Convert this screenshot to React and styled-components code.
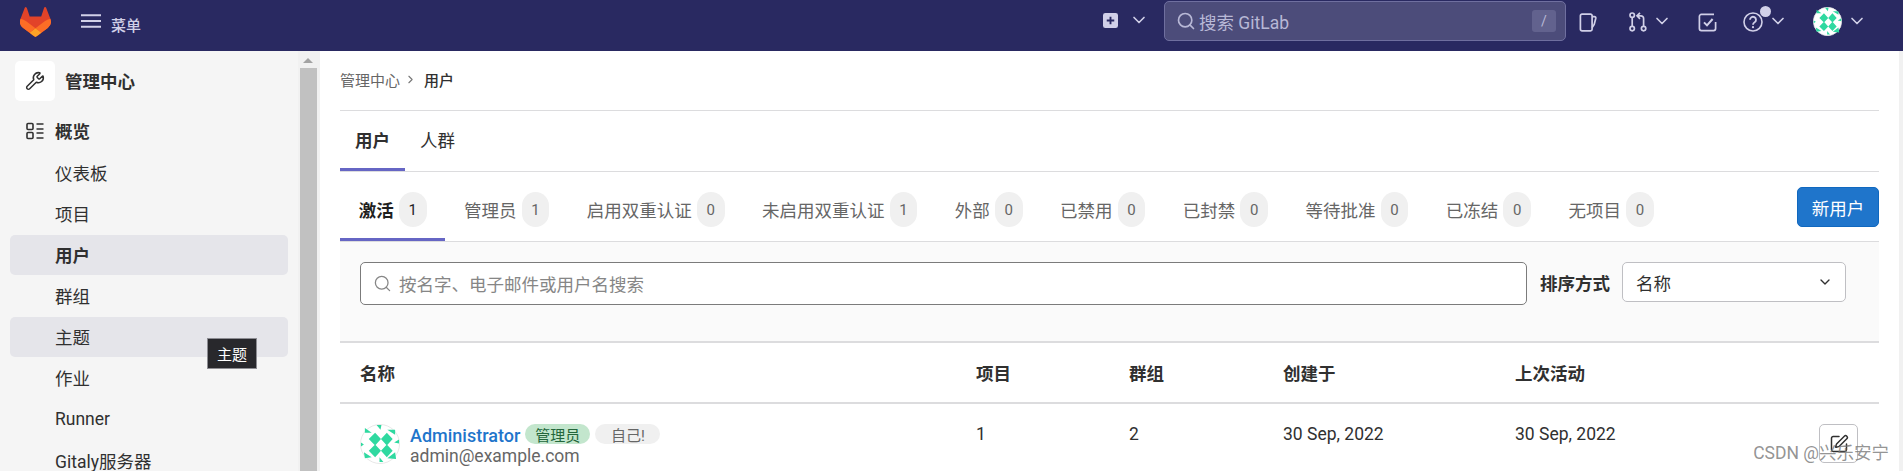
import React from "react";
import styled, { createGlobalStyle } from "styled-components";
import { ChevronDown, ChevronRight, Search, SquarePen, Wrench } from "lucide-react";

const FONT = `Roboto, "Noto Sans CJK SC", sans-serif`;

const GlobalStyle = createGlobalStyle`
  html, body {
    margin: 0;
    height: 100%;
    overflow: hidden;
    background: #fff;
  }
  body {
    font-family: ${FONT};
    font-size: 17.5px;
    color: #303030;
  }
`;

const Page = styled.div`
  position: relative;
  height: 471px;
  overflow: hidden;
`;

/* top bar */
const TopBar = styled.header`
  display: flex;
  align-items: center;
  height: 51px;
  padding-bottom: 1px;
  box-sizing: border-box;
  background: #292961;
  color: #d1d0e8;
`;
const Logo = styled.svg`
  width: 31px;
  height: 30px;
  margin: -6px 30px 0 20px;
`;
const MenuLabel = styled.span`
  font-size: 15px;
  font-weight: 500;
  margin-left: 10px;
  margin-top: -2px;
`;
const TopSpacer = styled.div`
  flex: 1;
`;
const TopEnd = styled.div`
  width: 36px;
  flex: none;
`;
const TopIcon = styled.svg`
  width: ${(p) => p.$w || 19}px;
  height: ${(p) => p.$h || 19}px;
  margin-left: ${(p) => p.$ml || 0}px;
  margin-top: ${(p) => p.$mt ?? -6}px;
  flex: none;
`;
const TopChevron = styled(ChevronDown)`
  width: 20px;
  height: 20px;
  margin-left: ${(p) => p.$ml}px;
  margin-top: ${(p) => p.$mt ?? -8}px;
  flex: none;
  stroke-width: 2;
`;
const SearchBox = styled.div`
  display: flex;
  align-items: center;
  width: 402px;
  height: 40px;
  margin-left: 15px;
  margin-top: -8px;
  padding: 0 9px 0 11px;
  box-sizing: border-box;
  background: #4c4c7a;
  border: 1px solid #6f6f9f;
  border-radius: 5px;
  color: #b8b8d6;
`;
const SearchText = styled.span`
  flex: 1;
  margin-left: 3px;
  font-size: 17.5px;
`;
const SlashKey = styled.span`
  display: flex;
  align-items: center;
  justify-content: center;
  width: 24px;
  height: 22px;
  border-radius: 3px;
  background: #62628e;
  font-size: 14px;
`;
const HelpWrap = styled.div`
  position: relative;
  display: flex;
  margin-left: 26px;
  margin-top: -6px;
`;
const HelpDot = styled.span`
  position: absolute;
  top: -6px;
  left: 17px;
  width: 11px;
  height: 11px;
  border-radius: 50%;
  background: #d1d0e8;
`;
const TopAvatar = styled.div`
  display: flex;
  margin-left: 25px;
  margin-top: -7px;
`;

/* body */
const Body = styled.div`
  display: flex;
  height: 420px;
`;
const Sidebar = styled.aside`
  width: 298px;
  flex: none;
  padding: 10px 10px 0;
  box-sizing: border-box;
  background: #f5f5f5;
  overflow: hidden;
`;
const ScrollTrack = styled.div`
  display: flex;
  flex-direction: column;
  align-items: center;
  flex: none;
  width: 22px;
  background: #f1f1f1;
`;
const ScrollArrow = styled.span`
  width: 0;
  height: 0;
  margin: 7px 0 5px -2px;
  border-left: 5px solid transparent;
  border-right: 5px solid transparent;
  border-bottom: 5px solid #a3a3a3;
`;
const ScrollThumb = styled.span`
  flex: 1;
  width: 17px;
  margin-left: -2px;
  background: #c1c1c1;
`;
const AdminTitle = styled.div`
  display: flex;
  align-items: center;
  gap: 10px;
  margin: 0 0 11px 5px;
  font-weight: 600;
`;
const AdminTile = styled.div`
  display: flex;
  align-items: center;
  justify-content: center;
  width: 40px;
  height: 40px;
  border-radius: 5px;
  background: #fff;
  color: #303030;
`;
const TitleText = styled.span`
  padding-bottom: 2px;
`;
const NavHead = styled.div`
  display: flex;
  align-items: center;
  gap: 11px;
  height: 40px;
  margin-bottom: 1px;
  padding: 0 0 3px 16px;
  box-sizing: border-box;
  font-weight: 600;
`;
const NavItem = styled.div`
  display: flex;
  align-items: center;
  height: 40px;
  margin-bottom: 1px;
  padding: 0 0 ${(p) => (p.$latin ? 0 : 2)}px 45px;
  box-sizing: border-box;
  border-radius: 5px;
  background: ${(p) => (p.$on ? "#e5e5ea" : "transparent")};
  font-weight: ${(p) => (p.$bold ? 600 : 400)};
`;
const Tooltip = styled.div`
  position: absolute;
  left: 207px;
  top: 338px;
  width: 50px;
  height: 31px;
  display: flex;
  align-items: center;
  justify-content: center;
  box-sizing: border-box;
  border: 1px solid #8d8d93;
  background: #28282c;
  color: #fff;
  font-size: 15px;
`;

/* main column */
const Main = styled.main`
  flex: 1;
  min-width: 0;
  padding: 0 20px;
`;
const PageEdge = styled.div`
  width: 4px;
  flex: none;
  background: #f1f1f1;
`;
const Crumbs = styled.nav`
  display: flex;
  align-items: center;
  height: 57px;
  padding-bottom: 2px;
  border-bottom: 1px solid #dcdcde;
  font-size: 15px;
  color: #666;
`;
const CrumbArrow = styled(ChevronRight)`
  width: 13px;
  height: 13px;
  margin: 0 7px 0 4px;
  color: #777;
`;
const CrumbNow = styled.span`
  color: #303030;
  font-weight: 500;
`;
const TopTabs = styled.div`
  display: flex;
  height: 60px;
  border-bottom: 1px solid #dcdcde;
`;
const TopTab = styled.div`
  display: flex;
  align-items: center;
  height: 60px;
  padding: 0 15px;
  box-sizing: border-box;
  font-weight: ${(p) => (p.$on ? 600 : 400)};
  border-bottom: 3px solid ${(p) => (p.$on ? "#6666c4" : "transparent")};
`;
const CountRow = styled.div`
  display: flex;
  align-items: flex-start;
  height: 69px;
  border-bottom: 1px solid #dcdcde;
`;
const CountTab = styled.div`
  display: flex;
  align-items: center;
  height: 69px;
  padding: 9px 18.75px 0;
  box-sizing: border-box;
  font-weight: ${(p) => (p.$on ? 600 : 400)};
  color: ${(p) => (p.$on ? "#1f1f1f" : "#666")};
  border-bottom: 3px solid ${(p) => (p.$on ? "#6666c4" : "transparent")};
`;
const CountPill = styled.span`
  display: flex;
  align-items: center;
  justify-content: center;
  width: 27.75px;
  height: 35px;
  margin-left: 5px;
  border-radius: 14px;
  background: #f0f0f0;
  font-size: 15px;
  font-weight: 400;
  color: ${(p) => (p.$on ? "#1f1f1f" : "#666")};
`;
const NewUser = styled.button`
  margin: 15px 0 0 auto;
  width: 82px;
  height: 40px;
  padding: 0;
  border: 1px solid #1068bf;
  border-radius: 5px;
  background: #1f75cb;
  color: #fff;
  font: 400 17.5px ${FONT};
`;
const FilterBar = styled.div`
  display: flex;
  align-items: flex-start;
  height: 101px;
  padding: 20px 33px 0 20px;
  box-sizing: border-box;
  background: #fafafa;
  border-bottom: 2px solid #dcdcde;
`;
const SearchField = styled.div`
  display: flex;
  align-items: center;
  gap: 7px;
  flex: 1;
  height: 43px;
  padding-left: 12px;
  box-sizing: border-box;
  background: #fff;
  border: 1px solid #7b7b7b;
  border-radius: 5px;
  color: #868686;
`;
const SortLabel = styled.label`
  margin: 8px 12px 0 13px;
  font-weight: 600;
`;
const SortSelect = styled.div`
  display: flex;
  align-items: center;
  justify-content: space-between;
  width: 224px;
  height: 40px;
  padding: 0 12px 0 13px;
  box-sizing: border-box;
  background: #fff;
  border: 1px solid #bfbfc3;
  border-radius: 5px;
`;
const TableGrid = styled.div`
  display: grid;
  grid-template-columns: 616px 153px 154px 232px 1fr;
  padding-left: 20px;
`;
const TableHead = styled(TableGrid)`
  align-items: center;
  height: 59px;
  border-bottom: 2px solid #dcdcde;
  font-weight: 600;
`;
const TableRow = styled(TableGrid)`
  padding-top: 20px;
  align-items: start;
`;
const UserCell = styled.div`
  display: flex;
  gap: 10px;
`;
const UserText = styled.div`
  display: flex;
  flex-direction: column;
`;
const NameLine = styled.div`
  display: flex;
  align-items: center;
  gap: 5px;
  height: 20px;
`;
const UserName = styled.a`
  padding-top: 2px;
  color: #1f75cb;
  font-size: 18px;
  font-weight: 500;
`;
const Badge = styled.span`
  display: flex;
  align-items: center;
  justify-content: center;
  width: 65px;
  height: 20px;
  border-radius: 10px;
  font-size: 15px;
  background: ${(p) => (p.$green ? "#c3e6cd" : "#f0f0f0")};
  color: ${(p) => (p.$green ? "#24663b" : "#666")};
`;
const Email = styled.div`
  margin-top: 1px;
  color: #666;
  line-height: 22px;
`;
const Cell = styled.div`
  line-height: 20px;
  color: #303030;
`;
const LastCell = styled(Cell)`
  display: flex;
  justify-content: space-between;
  padding-right: 21px;
`;
const EditButton = styled.button`
  display: flex;
  align-items: center;
  justify-content: center;
  width: 39px;
  height: 39px;
  padding: 0;
  background: #fff;
  border: 1px solid #bfbfc3;
  border-radius: 5px;
  color: #303030;
`;
const Watermark = styled.div`
  position: absolute;
  right: 14px;
  top: 441px;
  font-size: 17.5px;
  line-height: 24px;
  color: rgba(120, 120, 120, 0.8);
  white-space: nowrap;
`;

const Identicon = ({ size = 40 }) => (
  <svg width={size} height={size} viewBox="0 0 41 41">
    <circle cx="20.5" cy="20.5" r="20" fill="#fff" stroke="#e6e6e6" />
    <g fill="#2fd9a0">
      <path d="M15.5 9l6 6.5-6 6.5L9 15.5zM27.5 9l6 6.5-6 6.5-6-6.5zM15.5 21l6 6.5-6 6.5L9 27.5zM27.5 21l6 6.5-6 6.5-6-6.5z" />
      <path d="M17 1h5l-1 5zM5 4l7 5H5zM36 6l-8 0 8 5zM35 19l5-3v4zM1 19l3 2-3 2zM4 29l8 5-7 1zM36 29l1 7-9-1zM20 34l4 5h-4z" />
    </g>
  </svg>
);

const App = () => {
  const counts = [
    ["激活", 1, true],
    ["管理员", 1],
    ["启用双重认证", 0],
    ["未启用双重认证", 1],
    ["外部", 0],
    ["已禁用", 0],
    ["已封禁", 0],
    ["等待批准", 0],
    ["已冻结", 0],
    ["无项目", 0],
  ];
  return (
    <Page>
      <GlobalStyle />
      <TopBar>
        <Logo viewBox="0 0 25 24">
          <path fill="#E24329" d="m24.507 9.5-.034-.09L21.082.562a.896.896 0 0 0-1.694.091l-2.29 7.01H7.825L5.535.653a.898.898 0 0 0-1.694-.09L.451 9.411.416 9.5a6.297 6.297 0 0 0 2.09 7.278l.012.01.03.022 5.16 3.867 2.56 1.935 1.554 1.176a1.051 1.051 0 0 0 1.268 0l1.555-1.176 2.56-1.935 5.197-3.89.014-.01A6.297 6.297 0 0 0 24.507 9.5Z" />
          <path fill="#FC6D26" d="m24.507 9.5-.034-.09a11.44 11.44 0 0 0-4.56 2.051l-7.447 5.632 4.742 3.584 5.197-3.89.014-.01A6.297 6.297 0 0 0 24.507 9.5Z" />
          <path fill="#FCA326" d="m7.707 20.677 2.56 1.935 1.555 1.176a1.051 1.051 0 0 0 1.268 0l1.555-1.176 2.56-1.935-4.743-3.584-4.755 3.584Z" />
          <path fill="#FC6D26" d="M5.01 11.461a11.43 11.43 0 0 0-4.56-2.05L.416 9.5a6.297 6.297 0 0 0 2.09 7.278l.012.01.03.022 5.16 3.867 4.745-3.584-7.444-5.632Z" />
        </Logo>
        <TopIcon $w={20} $h={14} $mt={-8} viewBox="0 0 20 14">
          <path d="M0 1.2h20M0 7h20M0 12.8h20" stroke="currentColor" strokeWidth="2" />
        </TopIcon>
        <MenuLabel>菜单</MenuLabel>
        <TopSpacer />
        <TopIcon $w={15} $h={15} $mt={-10} viewBox="0 0 16 16">
          <path fillRule="evenodd" fill="currentColor" d="M2.5 0h11A2.5 2.5 0 0 1 16 2.5v11a2.5 2.5 0 0 1-2.5 2.5h-11A2.5 2.5 0 0 1 0 13.5v-11A2.5 2.5 0 0 1 2.5 0zM7 4v3H4v2h3v3h2V9h3V7H9V4z" />
        </TopIcon>
        <TopChevron $ml={11} $mt={-11} />
        <SearchBox>
          <Search size={20} strokeWidth={2} />
          <SearchText>搜索 GitLab</SearchText>
          <SlashKey>/</SlashKey>
        </SearchBox>
        <TopIcon $w={19} $h={19} $ml={13} viewBox="0 0 19 19" fill="none" stroke="currentColor" strokeWidth="1.7">
          <path d="M3 1.2h8.5a1.6 1.6 0 0 1 1.6 1.6v13.4a1.6 1.6 0 0 1-1.6 1.6H3a1.6 1.6 0 0 1-1.6-1.6V2.8A1.6 1.6 0 0 1 3 1.2z" />
          <path d="M13 3.6h2.4a1.4 1.4 0 0 1 1.4 1.7l-1.6 6.2-2.2 3.2" />
        </TopIcon>
        <TopIcon $w={18} $h={20} $ml={31} viewBox="0 0 18 20" fill="none" stroke="currentColor" strokeWidth="1.7">
          <circle cx="3.2" cy="3.2" r="2.2" />
          <circle cx="3.2" cy="16.6" r="2.2" />
          <circle cx="14.6" cy="16.6" r="2.2" />
          <path d="M3.2 5.6v8.6M14.6 14.2V6.4a2.6 2.6 0 0 0-2.6-2.6H8.6M11 .8 8 3.8l3 3" />
        </TopIcon>
        <TopChevron $ml={5} />
        <TopIcon $w={19} $h={19} $ml={26} viewBox="0 0 19 19" fill="none" stroke="currentColor" strokeWidth="1.7">
          <path d="M17.6 9v6.6a2 2 0 0 1-2 2H3.4a2 2 0 0 1-2-2V3.4a2 2 0 0 1 2-2h12.6" />
          <path d="M6 9.4l3 3 5.6-6.4" strokeWidth="2" />
        </TopIcon>
        <HelpWrap>
          <TopIcon $w={20} $h={20} $mt={0} viewBox="0 0 20 20" fill="none" stroke="currentColor" strokeWidth="1.6">
            <circle cx="10" cy="10" r="9" />
            <path d="M7 7.8a3 3 0 1 1 4.6 2.5c-1 .6-1.6 1.2-1.6 2.4" strokeWidth="1.8" />
            <circle cx="10" cy="15.2" r="1.1" fill="currentColor" stroke="none" />
          </TopIcon>
          <HelpDot />
        </HelpWrap>
        <TopChevron $ml={5} />
        <TopAvatar>
          <Identicon size={29} />
        </TopAvatar>
        <TopChevron $ml={5} />
        <TopEnd />
      </TopBar>
      <Body>
        <Sidebar>
          <AdminTitle>
            <AdminTile>
              <Wrench size={20} strokeWidth={1.8} />
            </AdminTile>
            <TitleText>管理中心</TitleText>
          </AdminTitle>
          <NavHead>
            <svg width="18" height="18" viewBox="0 0 18 18" fill="none" stroke="#303030" strokeWidth="1.6">
              <rect x="1" y="1.5" width="6" height="6" rx="1" />
              <rect x="1" y="10.5" width="6" height="6" rx="1" />
              <path d="M10.5 2h7M10.5 7h7M10.5 11h7M10.5 16h7" />
            </svg>
            概览
          </NavHead>
          <NavItem>仪表板</NavItem>
          <NavItem>项目</NavItem>
          <NavItem $on $bold>用户</NavItem>
          <NavItem>群组</NavItem>
          <NavItem $on>主题</NavItem>
          <NavItem>作业</NavItem>
          <NavItem $latin>Runner</NavItem>
          <NavItem $latin>Gitaly服务器</NavItem>
        </Sidebar>
        <ScrollTrack>
          <ScrollArrow />
          <ScrollThumb />
        </ScrollTrack>
        <Main>
          <Crumbs>
            管理中心
            <CrumbArrow />
            <CrumbNow>用户</CrumbNow>
          </Crumbs>
          <TopTabs>
            <TopTab $on>用户</TopTab>
            <TopTab>人群</TopTab>
          </TopTabs>
          <CountRow>
            {counts.map(([label, n, on]) => (
              <CountTab key={label} $on={on}>
                {label}
                <CountPill $on={on}>{n}</CountPill>
              </CountTab>
            ))}
            <NewUser>新用户</NewUser>
          </CountRow>
          <FilterBar>
            <SearchField>
              <Search size={19} strokeWidth={1.6} />
              按名字、电子邮件或用户名搜索
            </SearchField>
            <SortLabel>排序方式</SortLabel>
            <SortSelect>
              名称
              <ChevronDown size={16} strokeWidth={2} />
            </SortSelect>
          </FilterBar>
          <TableHead>
            <div>名称</div>
            <div>项目</div>
            <div>群组</div>
            <div>创建于</div>
            <div>上次活动</div>
          </TableHead>
          <TableRow>
            <UserCell>
              <Identicon />
              <UserText>
                <NameLine>
                  <UserName>Administrator</UserName>
                  <Badge $green>管理员</Badge>
                  <Badge>自己!</Badge>
                </NameLine>
                <Email>admin@example.com</Email>
              </UserText>
            </UserCell>
            <Cell>1</Cell>
            <Cell>2</Cell>
            <Cell>30 Sep, 2022</Cell>
            <LastCell>
              30 Sep, 2022
              <EditButton>
                <SquarePen size={20} strokeWidth={1.8} />
              </EditButton>
            </LastCell>
          </TableRow>
        </Main>
        <PageEdge />
      </Body>
      <Tooltip>主题</Tooltip>
      <Watermark>CSDN @兴乐安宁</Watermark>
    </Page>
  );
};

export default App;
